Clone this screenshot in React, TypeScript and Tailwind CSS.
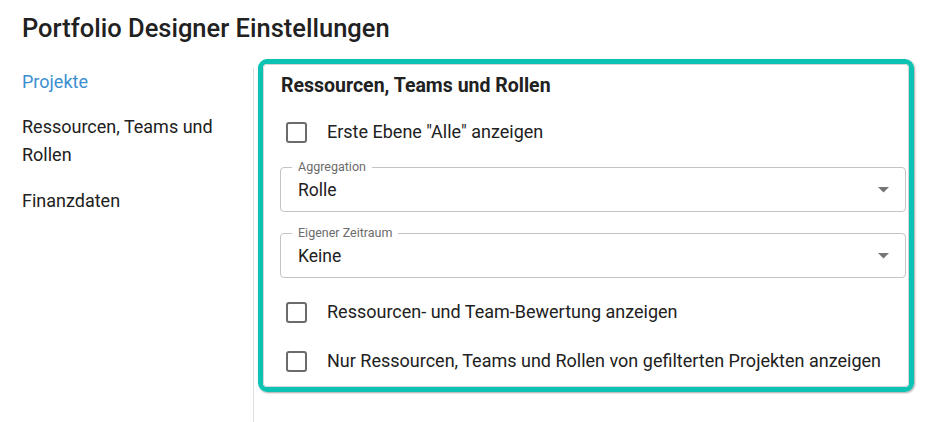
import React from "react";

const font = { fontFamily: "Roboto, 'Liberation Sans', sans-serif" };

function Checkbox({ label }: { label: string }) {
  return (
    <div className="flex items-center h-[42px]">
      <div className="ml-[5px] w-[21px] h-[21px] border-2 border-[#6b6b6b] rounded-[3px] shrink-0" />
      <span className="ml-[20px] text-[18px] leading-6 text-[#212121]">{label}</span>
    </div>
  );
}

function Select({ label, value }: { label: string; value: string }) {
  return (
    <div className="relative h-[45px] border border-[#c4c4c4] rounded-[4px] flex items-center px-[17px]">
      <span className="absolute left-[11px] -top-[9px] bg-white px-[6px] text-[12.5px] leading-4 text-[#6b6b6b]">
        {label}
      </span>
      <span className="flex-1 text-[17.5px] leading-6 text-[#212121] pt-[1px]">{value}</span>
      <svg width="11" height="6" viewBox="0 0 11 6" className="mr-[-1px]">
        <path d="M0 0 L11 0 L5.5 5.5 Z" fill="#757575" />
      </svg>
    </div>
  );
}

export default function App() {
  return (
    <div className="w-[931px] h-[422px] bg-white overflow-hidden" style={font}>
      <div className="pl-[22px] pt-[12px]">
        <h1 className="text-[25.5px] leading-8 font-medium text-[#212121]">
          Portfolio Designer Einstellungen
        </h1>
      </div>
      <div className="flex items-start pl-[22px] mt-[15px]">
        <div className="w-[232px] mt-[9px] h-[360px] border-r border-[#e0e0e0] flex flex-col gap-[17px] pr-[20px]">
          <div className="text-[18px] leading-7 text-[#3b8fd0]">Projekte</div>
          <div className="text-[18px] leading-7 text-[#212121]">Ressourcen, Teams und Rollen</div>
          <div className="text-[18px] leading-7 text-[#212121] mt-[1px]">Finanzdaten</div>
        </div>
        <div className="ml-[4px] w-[656px] h-[333px] border-[5px] border-[#0cc3b3] rounded-[9px] shadow-[1px_1px_2px_rgba(0,0,0,0.35)]">
          <div className="h-full border border-[#d6d6d6] rounded-[4px] pl-[16px] pr-[2px] pt-[8px]">
            <h2 className="pl-[1px] text-[19.5px] leading-[26px] font-bold text-[#212121]">
              Ressourcen, Teams und Rollen
            </h2>
            <div className="mt-[12px] pl-[1px]">
              <Checkbox label={'Erste Ebene "Alle" anzeigen'} />
            </div>
            <div className="mt-[14px]">
              <Select label="Aggregation" value="Rolle" />
            </div>
            <div className="mt-[21px]">
              <Select label="Eigener Zeitraum" value="Keine" />
            </div>
            <div className="mt-[13px] pl-[1px]">
              <Checkbox label="Ressourcen- und Team-Bewertung anzeigen" />
            </div>
            <div className="mt-[7px] pl-[1px]">
              <Checkbox label="Nur Ressourcen, Teams und Rollen von gefilterten Projekten anzeigen" />
            </div>
          </div>
        </div>
      </div>
    </div>
  );
}
